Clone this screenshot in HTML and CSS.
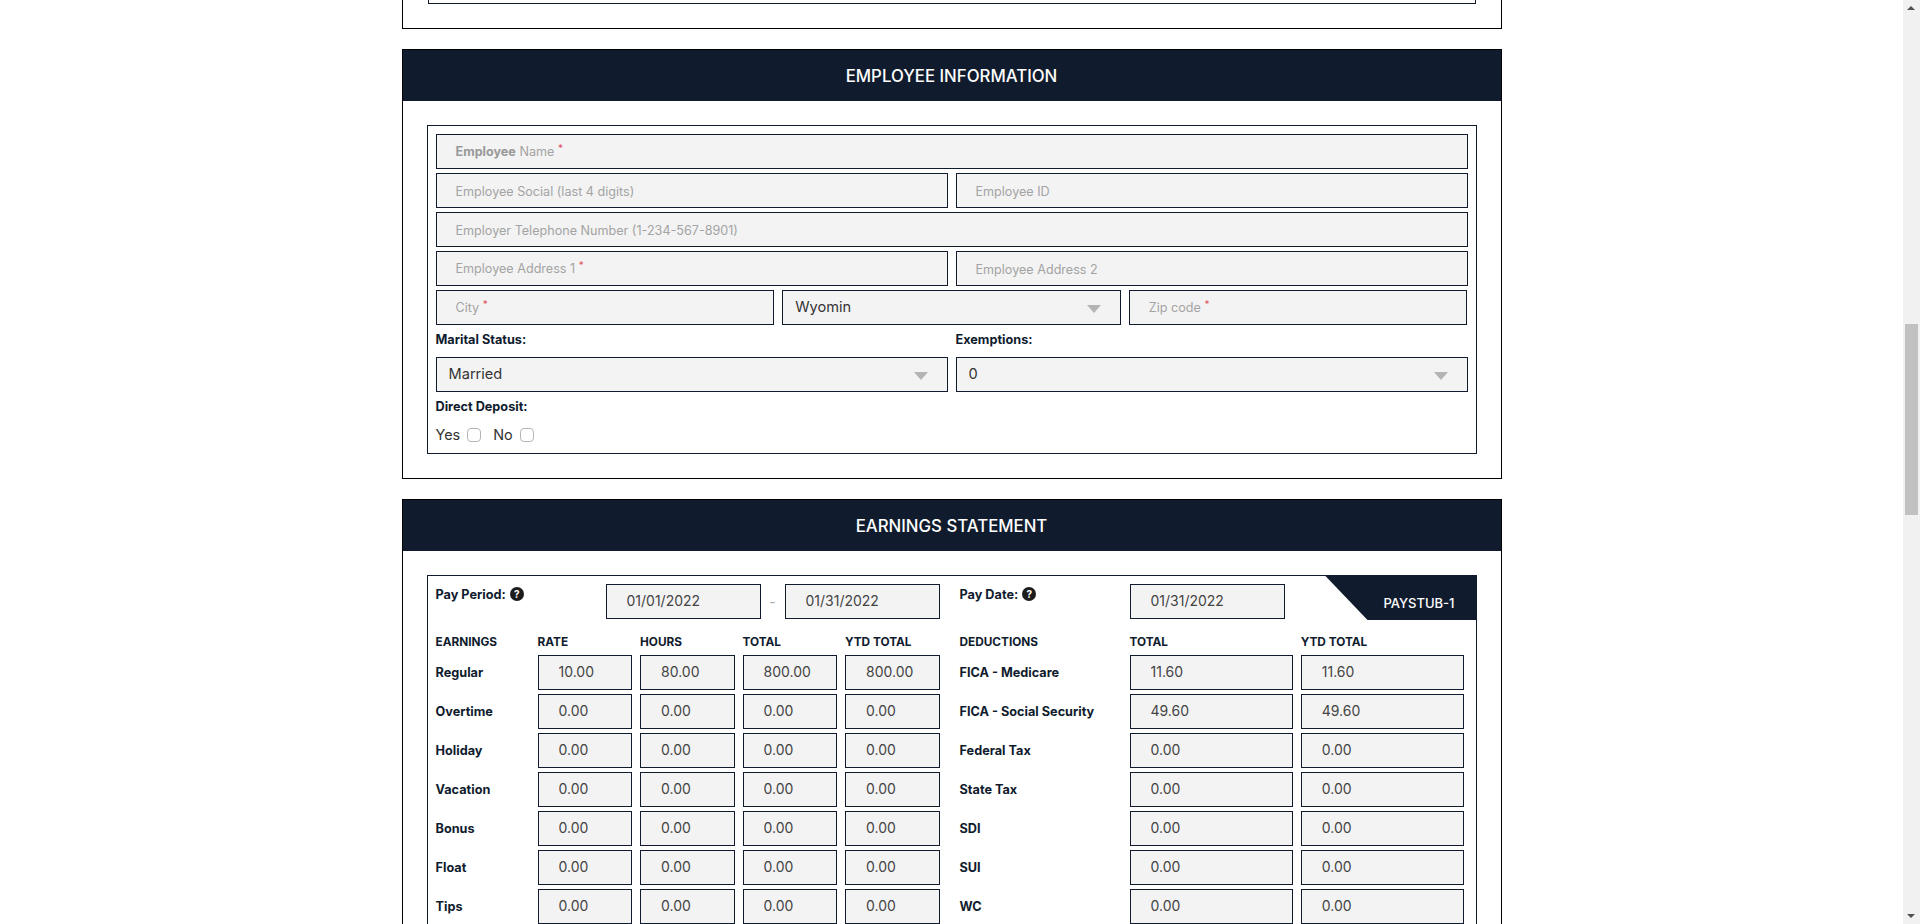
FILE: index.html
```html
<!DOCTYPE html>
<html>

<head>
    <meta name="viewport" content="width=device-width, initial-scale=1.0">
    <title>Paystub Generator</title>
    <link rel="stylesheet" href="styles.css">
</head>

<body>
    <div class="page">
        <main class="content">
            <section class="panel panel-stub">
                <div class="inner inner-stub"></div>
            </section>

            <section class="panel">
                <h2 class="panel-title">EMPLOYEE INFORMATION</h2>
                <div class="panel-body">
                    <div class="inner stack">
                        <div class="field">
                            <input type="text">
                            <span class="hint"><b>Employee</b> Name <i>*</i></span>
                        </div>
                        <div class="cols-2">
                            <input type="text" placeholder="Employee Social (last 4 digits)">
                            <input type="text" placeholder="Employee ID">
                        </div>
                        <input type="text" placeholder="Employer Telephone Number (1-234-567-8901)">
                        <div class="cols-2">
                            <div class="field">
                                <input type="text">
                                <span class="hint">Employee Address 1 <i>*</i></span>
                            </div>
                            <input type="text" placeholder="Employee Address 2">
                        </div>
                        <div class="cols-3">
                            <div class="field">
                                <input type="text">
                                <span class="hint">City <i>*</i></span>
                            </div>
                            <div class="select-wrap">
                                <select><option>Wyomin</option></select>
                            </div>
                            <div class="field">
                                <input type="text">
                                <span class="hint">Zip code <i>*</i></span>
                            </div>
                        </div>
                        <div class="cols-2">
                            <div class="labelled">
                                <label class="title">Marital Status:</label>
                                <div class="select-wrap">
                                    <select><option>Married</option></select>
                                </div>
                            </div>
                            <div class="labelled">
                                <label class="title">Exemptions:</label>
                                <div class="select-wrap">
                                    <select><option>0</option></select>
                                </div>
                            </div>
                        </div>
                        <label class="title">Direct Deposit:</label>
                        <div class="checks">
                            <label>Yes</label><input type="checkbox">
                            <label>No</label><input type="checkbox">
                        </div>
                    </div>
                </div>
            </section>

            <section class="panel">
                <h2 class="panel-title">EARNINGS STATEMENT</h2>
                <div class="panel-body">
                    <div class="inner earnings">
                        <div class="stub-tag">PAYSTUB-1</div>

                        <div class="dates-left">
                            <label class="title">Pay Period: <span class="help">?</span></label>
                            <input type="text" value="01/01/2022">
                            <span class="dash">-</span>
                            <input type="text" value="01/31/2022">
                        </div>
                        <div class="dates-right">
                            <label class="title">Pay Date: <span class="help">?</span></label>
                            <input type="text" value="01/31/2022">
                        </div>

                        <div class="table-left" id="left"></div>
                        <div class="table-right" id="right"></div>
                    </div>
                </div>
            </section>
        </main>

        <aside class="scrollbar">
            <div class="arrow arrow-up"></div>
            <div class="track"><div class="thumb"></div></div>
            <div class="arrow arrow-down"></div>
        </aside>
    </div>

    <script type="text/javascript">
    var left = [
        ["Regular", "10.00", "80.00", "800.00", "800.00"],
        ["Overtime", "0.00", "0.00", "0.00", "0.00"],
        ["Holiday", "0.00", "0.00", "0.00", "0.00"],
        ["Vacation", "0.00", "0.00", "0.00", "0.00"],
        ["Bonus", "0.00", "0.00", "0.00", "0.00"],
        ["Float", "0.00", "0.00", "0.00", "0.00"],
        ["Tips", "0.00", "0.00", "0.00", "0.00"]
    ];
    var right = [
        ["FICA - Medicare", "11.60", "11.60"],
        ["FICA - Social Security", "49.60", "49.60"],
        ["Federal Tax", "0.00", "0.00"],
        ["State Tax", "0.00", "0.00"],
        ["SDI", "0.00", "0.00"],
        ["SUI", "0.00", "0.00"],
        ["WC", "0.00", "0.00"]
    ];

    function fill(id, heads, rows) {
        var box = document.getElementById(id);
        for (var i = 0; i < heads.length; i++) {
            var head = document.createElement("span");
            head.className = "head";
            head.innerHTML = heads[i];
            box.append(head);
        }
        for (var r = 0; r < rows.length; r++) {
            var name = document.createElement("label");
            name.className = "title";
            name.innerHTML = rows[r][0];
            box.append(name);
            for (var c = 1; c < rows[r].length; c++) {
                var cell = document.createElement("input");
                cell.type = "text";
                cell.value = rows[r][c];
                box.append(cell);
            }
        }
    }

    fill("left", ["EARNINGS", "RATE", "HOURS", "TOTAL", "YTD TOTAL"], left);
    fill("right", ["DEDUCTIONS", "TOTAL", "YTD TOTAL"], right);
    </script>
</body>

</html>
```

FILE: styles.css
```css
* {
    box-sizing: border-box;
}

html,
body {
    margin: 0;
    height: 924px;
    overflow: hidden;
    background: #fff;
}

body {
    font-family: Inter, "Liberation Sans", sans-serif;
    color: #101c2e;
}

.page {
    display: flex;
    height: 924px;
}

.content {
    flex: 1;
    display: flex;
    flex-direction: column;
    align-items: center;
    gap: 20px;
    overflow: hidden;
}

.panel {
    flex: none;
    width: 1100px;
    border: 1px solid #000;
    background: #fff;
}

.panel-stub {
    height: 29px;
    padding: 0 25px;
    border-top: 0;
}

.panel-title {
    height: 51px;
    margin: 0;
    background: #101c2e;
    color: #fff;
    font-size: 16.8px;
    font-weight: 500;
    line-height: 52px;
    text-align: center;
}

.panel-body {
    padding: 24px 24px 24px;
}

.inner {
    position: relative;
    border: 1px solid #101c2e;
    padding: 8px;
}

.inner-stub {
    height: 4px;
    padding: 0;
    border-top: 0;
}

.stack {
    display: flex;
    flex-direction: column;
    gap: 4px;
}

.cols-2 {
    display: grid;
    grid-template-columns: 1fr 1fr;
    gap: 8px;
}

.cols-3 {
    display: grid;
    grid-template-columns: 1fr 1fr 1fr;
    gap: 8px;
}

.labelled {
    display: flex;
    flex-direction: column;
    gap: 4px;
}

input[type="text"],
select {
    display: block;
    width: 100%;
    height: 35px;
    margin: 0;
    padding: 0 19px;
    border: 1px solid #101c2e;
    border-radius: 0;
    background: #f3f3f3;
    color: #444;
    font-family: inherit;
    font-size: 14px;
    outline: 0;
    appearance: none;
}

.earnings input[type="text"] {
    padding: 0 20px 2px;
}

input::placeholder {
    color: #a3a3a3;
    font-size: 12.6px;
    opacity: 1;
}

select {
    padding: 0 12px 1px;
    color: #333;
    font-size: 14.6px;
}

.field {
    position: relative;
}

.hint {
    position: absolute;
    left: 20px;
    top: 9px;
    color: #a3a3a3;
    font-size: 12.6px;
    line-height: 18px;
    pointer-events: none;
}

.hint b {
    font-weight: 700;
    color: #999;
}

.hint i {
    position: relative;
    top: -4px;
    color: #e0525c;
    font-size: 10px;
    font-style: normal;
}

.select-wrap {
    position: relative;
}

.select-wrap::after {
    content: "";
    position: absolute;
    right: 20px;
    top: 15px;
    border-left: 7px solid transparent;
    border-right: 7px solid transparent;
    border-top: 8px solid #b4b4b4;
}

.title {
    display: block;
    height: 24px;
    color: #101c2e;
    font-size: 12.7px;
    font-weight: 700;
    line-height: 22px;
}

.table-left .title,
.table-right .title {
    line-height: 23px;
}

.checks {
    display: flex;
    align-items: center;
    height: 21px;
    font-size: 14.4px;
    color: #333;
}

.checks input {
    width: 14px;
    height: 14px;
    margin: 1px 12px 0 7px;
    border: 1px solid #b5b5b5;
    border-radius: 4px;
    background: #fff;
    appearance: none;
}

.earnings {
    display: grid;
    grid-template-columns: 504px 1fr;
    column-gap: 20px;
    padding-bottom: 40px;
}

.stub-tag {
    position: absolute;
    top: -1px;
    right: -1px;
    width: 152px;
    height: 45px;
    padding: 19px 22px 0 0;
    background: #101c2e;
    color: #fff;
    font-size: 13px;
    font-weight: 500;
    line-height: 18px;
    text-align: right;
    clip-path: polygon(0 0, 100% 0, 100% 100%, 43px 100%);
}

.dates-left {
    display: grid;
    grid-template-columns: 170px 155px 24px 155px;
    height: 35px;
}

.dates-right {
    display: grid;
    grid-template-columns: 170px 155px;
    height: 35px;
}

.dash {
    height: 35px;
    text-align: center;
    color: #aaa;
    font-size: 14px;
    line-height: 35px;
}

.help {
    display: inline-block;
    width: 14px;
    height: 14px;
    margin-left: 1px;
    border-radius: 50%;
    background: #1c1c1c;
    color: #fff;
    font-size: 10px;
    line-height: 14px;
    text-align: center;
    vertical-align: 1px;
}

.table-left,
.table-right {
    display: grid;
    row-gap: 4px;
    column-gap: 8px;
    margin-top: 14px;
    grid-auto-rows: 35px;
    grid-template-rows: 18px;
    align-items: center;
}

.table-left {
    grid-template-columns: 94px repeat(4, 1fr);
}

.table-right {
    grid-template-columns: 162px 1fr 1fr;
    width: 504.5px;
}

.head {
    color: #101c2e;
    font-size: 11.8px;
    font-weight: 700;
    line-height: 18px;
}

.scrollbar {
    flex: none;
    display: flex;
    flex-direction: column;
    width: 17px;
    height: 924px;
    background: #f1f1f1;
}

.track {
    flex: 1;
    padding: 307px 2px 0;
}

.thumb {
    height: 191px;
    background: #c1c1c1;
}

.arrow {
    position: relative;
    height: 17px;
}

.arrow::before {
    content: "";
    position: absolute;
    left: 4px;
    border-left: 4px solid transparent;
    border-right: 4px solid transparent;
}

.arrow-up::before {
    top: 6px;
    border-bottom: 4px solid #505050;
}

.arrow-down::before {
    bottom: 6px;
    border-top: 4px solid #505050;
}
```
